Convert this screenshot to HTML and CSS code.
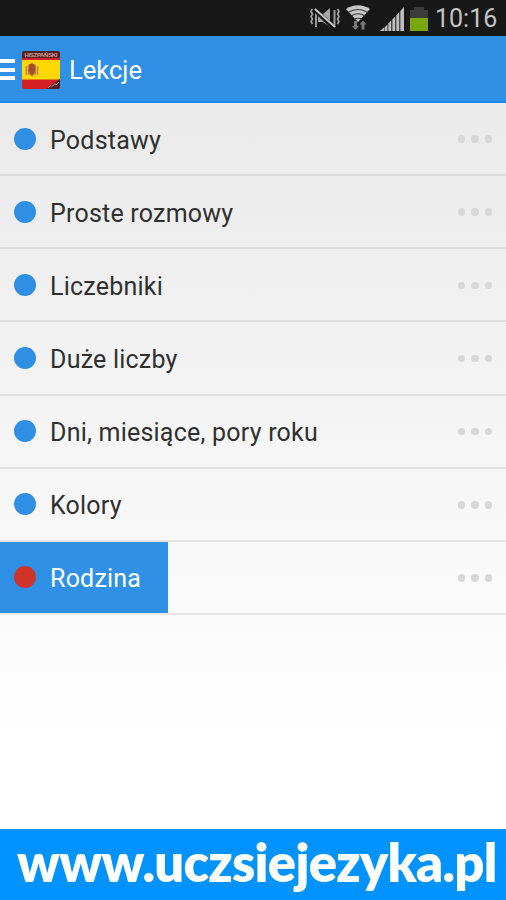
FILE: index.html
```html
<!DOCTYPE html>
<html lang="pl">
<head>
<meta charset="utf-8">
<title>Lekcje</title>
<link rel="stylesheet" href="styles.css">
</head>
<body>
<div class="status">
  <svg class="icons" width="129" height="36" viewBox="306 0 129 36">
    <path d="M312.500 9l-1.500 2.500 1.500 2.500-1.500 2.500 1.500 2.500-1.500 2.500 1.500 2.500M337.500 9l1.500 2.500-1.500 2.500 1.500 2.500-1.500 2.500 1.500 2.500-1.500 2.500" fill="none" stroke="#a5a5a5" stroke-width="1.600"/>
    <path d="M316 10v17M334.500 10v17" stroke="#999" stroke-width="2"/>
    <path d="M318 14h5l7-6v19l-7-5h-5z" fill="#a5a5a5"/>
    <path d="M314 9l20 19" stroke="#181818" stroke-width="4.500"/>
    <path d="M315 9l20 18" stroke="#c5c5c5" stroke-width="2"/>
    <path d="M346 9q12-7.500 24 0l-12 13z" fill="#c8c8c8"/>
    <path d="M348 12.500q10-6 20 0M351 16q7-4.500 14 0M354 19.500q4-2.500 8 0" fill="none" stroke="#3a3a3a" stroke-width="1.200"/>
    <path d="M355.500 30l-3.500-4h2v-5h3v5h2zM363 20.500l3.500 4h-2v5h-3v-5h-2z" fill="#777"/>
    <path d="M380 31l4-3.500v3.500zM384.500 27.500l3-3v6.500h-3zM388.300 23.500l3-3.200v10.700h-3zM392.300 19.500l3-3.300v14.800h-3zM396.300 15.500l3-3.500V31h-3zM400.300 11l3.700-4v24h-3.700z" fill="#bdbdbd"/>
    <path d="M414 7h10v3h4v8h-18v-8h4z" fill="#3b3b3b"/>
    <path d="M410 18h18v13h-18z" fill="#79a70a"/>
  </svg>
  <span class="clock">10:16</span>
</div>
<header class="bar">
  <div class="menu"><i></i><i></i><i></i></div>
  <svg class="flag" width="38" height="38" viewBox="0 0 38 38">
    <clipPath id="r"><rect width="38" height="38" rx="2.500"/></clipPath>
    <g clip-path="url(#r)">
      <path fill="#d41f24" d="M0 0h38v38H0z"/>
      <path fill="#ffd800" d="M0 9h38v19.500H0z"/>
      <path fill="#54211f" d="M0 0h38v7H0zM24 38l14-10v10z"/>
      <path fill="#c58a2c" d="M6 14l4-2.500 4 2.500v9l-4 3-4-3z"/>
      <path fill="#a8482c" d="M7.500 13h4l2 4-1 5-3 2-3-4z"/>
      <path d="M4.500 15v9M15.500 15v9" stroke="#b8954a" stroke-width="2"/>
      <text x="19" y="6" class="flag-text" textLength="33">HISZPAŃSKI</text>
      <path d="M26 36.500l3-2 1 1 3-3 1 1.500 3-3" stroke="#c78984" fill="none"/>
    </g>
  </svg>
  <h1>Lekcje</h1>
</header>
<main class="list">
  <div class="row"><b class="dot"></b><span>Podstawy</span><div class="more"><i></i><i></i><i></i></div></div>
  <div class="row"><b class="dot"></b><span>Proste rozmowy</span><div class="more"><i></i><i></i><i></i></div></div>
  <div class="row"><b class="dot"></b><span>Liczebniki</span><div class="more"><i></i><i></i><i></i></div></div>
  <div class="row"><b class="dot"></b><span>Duże liczby</span><div class="more"><i></i><i></i><i></i></div></div>
  <div class="row"><b class="dot"></b><span>Dni, miesiące, pory roku</span><div class="more"><i></i><i></i><i></i></div></div>
  <div class="row"><b class="dot"></b><span>Kolory</span><div class="more"><i></i><i></i><i></i></div></div>
  <div class="row active"><b class="dot"></b><span>Rodzina</span><div class="more"><i></i><i></i><i></i></div></div>
</main>
<footer class="footer"><span>www.uczsiejezyka.pl</span></footer>
</body>
</html>
```
FILE: styles.css
```css
* { box-sizing: border-box; }
body {
  margin: 0;
  width: 506px;
  height: 900px;
  overflow: hidden;
  display: flex;
  flex-direction: column;
  font-family: Roboto, sans-serif;
}
.status {
  height: 36px;
  flex: none;
  background: #181818;
  display: flex;
  align-items: center;
  padding-left: 306px;
}
.icons { flex: none; }
.clock {
  color: #c4c4c4;
  font-size: 25px;
  line-height: 34px;
  padding-top: 2px;
  white-space: nowrap;
}
.bar {
  height: 67px;
  flex: none;
  padding-top: 2px;
  background: #2f90e6;
  border-bottom: 2px solid #1888ea;
  display: flex;
  align-items: center;
  color: #fff;
}
.menu {
  width: 15px;
  display: grid;
  gap: 4.500px;
  margin-right: 7px;
}
.menu i { height: 4px; background: #fff; }
.flag-text {
  font: bold 6px "Liberation Sans", sans-serif;
  fill: #c9a09a;
  text-anchor: middle;
}
h1 {
  margin: 0 0 0 9px;
  font-size: 25.500px;
  font-weight: 400;
  line-height: 30px;
}
.list {
  flex: 1;
  background: linear-gradient(#eaeaea, #fff 88%);
}
.row {
  height: 73.150px;
  display: flex;
  align-items: center;
  padding: 0 14px;
  border-bottom: 2px solid rgba(0, 0, 0, 0.08);
  font-size: 25px;
  letter-spacing: 0.220px;
  color: #303030;
}
.dot {
  width: 22px;
  height: 22px;
  border-radius: 50%;
  background: #2e8fe5;
  margin-right: 14px;
}
.row span {
  white-space: nowrap;
  padding-top: 3px;
}
.more {
  margin-left: auto;
  padding-top: 1px;
  display: flex;
  gap: 6px;
}
.more i {
  width: 7.500px;
  height: 7.500px;
  border-radius: 50%;
  background: #d7d7d7;
}
.active {
  color: #fff;
  background: linear-gradient(#2f90e6, #2f90e6) 0 0 / 168px 100% no-repeat;
}
.active .dot { background: #cf3429; }
.footer {
  height: 71px;
  flex: none;
  background: #0092ff;
  color: #fff;
  padding-left: 17px;
  font: 800 52.500px/65px Lato, sans-serif;
  letter-spacing: -0.750px;
  white-space: nowrap;
}
```
